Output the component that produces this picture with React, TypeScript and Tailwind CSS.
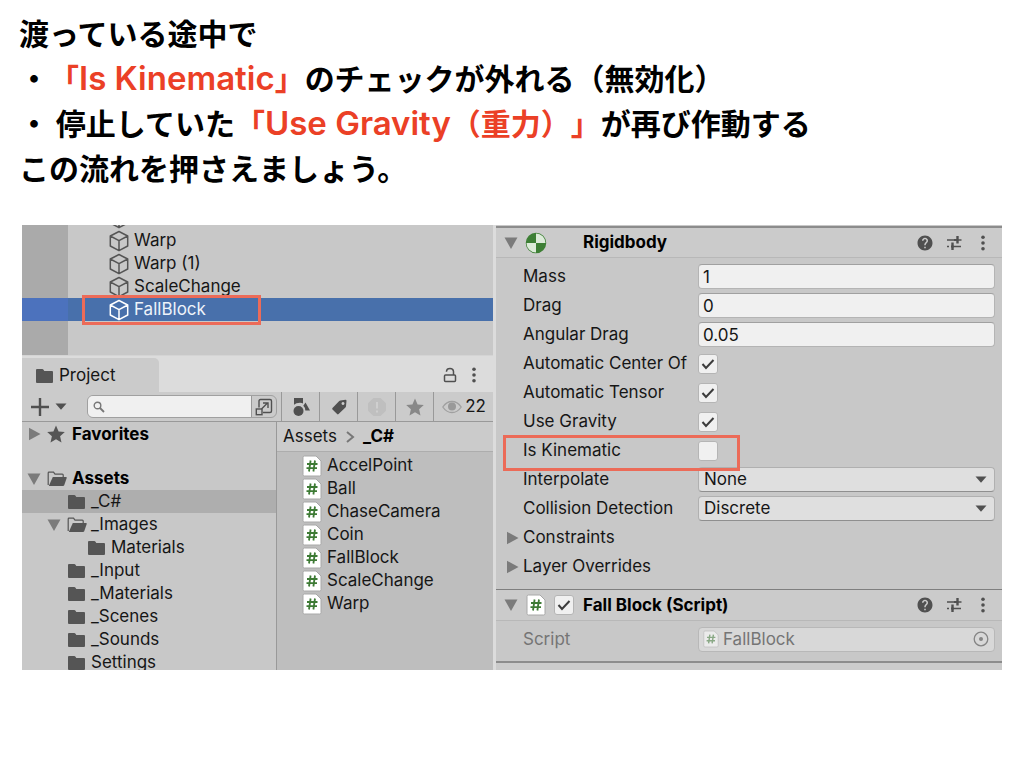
import { useState } from "react";
import type { ReactNode } from "react";
import { MdHelp } from "react-icons/md";

const CubeIcon = ({ className }: { className?: string }) => (
  <svg viewBox="0 0 20 22" className={`h-[22px] w-[20px] shrink-0 ${className}`} fill="none" stroke="currentColor" strokeWidth="1.5" strokeLinejoin="round">
    <path d="M10 1.5 18.7 6v10L10 20.7 1.3 16V6z M1.3 6 10 10.6 18.7 6 M10 10.6v10" />
  </svg>
);

const FolderIcon = () => (
  <svg viewBox="0 0 20 16" className="h-[16px] w-[20px] shrink-0" fill="#555">
    <path d="M1 2q0-1 1-1h5.3q.7 0 1 .6L9.3 3H17q1 0 1 1v10q0 1-1 1H2q-1 0-1-1z" />
  </svg>
);

const FolderOpenIcon = () => (
  <svg viewBox="0 0 20 16" className="h-[16px] w-[20px] shrink-0">
    <path d="M1.2 14V2q0-.8.8-.8h4.5l1.500 2h7.3q.9 0 .9.9V6" fill="none" stroke="#555" strokeWidth="1.2" />
    <path d="M5.8 6H19q1 0 .7.9l-2.500 7.3q-.3.8-1.2.8H1.8z" fill="#555" />
  </svg>
);

const ScriptIcon = ({ className }: { className?: string }) => (
  <svg viewBox="0 0 20 22" className={`shrink-0 ${className}`}>
    <path d="M2.500 1H14l5 5v13.500q0 1.500-1.500 1.500h-15Q1 21 1 19.500v-17Q1 1 2.500 1z" fill="#fff" stroke="#a8a8a8" />
    <path d="M8.600 5.500 7 16.500 M13 5.500l-1.600 11 M5 9h10.500 M4.500 13.200H15" fill="none" stroke="#3d7a34" strokeWidth="1.800" />
  </svg>
);

const StarIcon = ({ className }: { className?: string }) => (
  <svg viewBox="0 0 20 20" className={`h-[20px] w-[20px] shrink-0 ${className}`} fill="currentColor">
    <path d="m10 1.500 2.600 5.900 6.200.6-4.700 4.200 1.400 6.300L10 15.200l-5.500 3.300 1.400-6.300L1.200 8l6.200-.6z" />
  </svg>
);

const Foldout = ({ open }: { open?: boolean }) => (
  <svg viewBox="0 0 14 14" className="h-[14px] w-[14px] shrink-0" fill="#7b7b7b">
    {open ? <path d="M.5 1.500h13L7 13z" /> : <path d="M1 .8v12.400L12.500 7z" />}
  </svg>
);

const Caret = ({ className }: { className?: string }) => (
  <svg viewBox="0 0 12 7" className={`h-[7px] w-[12px] shrink-0 ${className}`} fill="#505050">
    <path d="M.5.500h11L6 6.800z" />
  </svg>
);

const SlidersIcon = () => (
  <svg viewBox="0 0 16 16" className="h-[16px] w-[16px]" fill="none" stroke="#505050">
    <path d="M1 5h7 M12 5h3.500 M1 11.500h2 M8 11.500h7" strokeWidth="1.600" />
    <path d="M11.500 1v7.500 M6.500 7.500V15" strokeWidth="2.400" />
    <path d="M8 5h3.500 M5 11.500h3" strokeWidth="1.800" />
  </svg>
);

const DotsIcon = () => (
  <svg viewBox="0 0 6 16" className="h-[16px] w-[6px]" fill="#505050">
    <circle cx="3" cy="2.200" r="1.800" />
    <circle cx="3" cy="8" r="1.800" />
    <circle cx="3" cy="13.800" r="1.800" />
  </svg>
);

const hierarchy = ["Warp", "Warp (1)", "ScaleChange"];

const scripts = ["AccelPoint", "Ball", "ChaseCamera", "Coin", "FallBlock", "ScaleChange", "Warp"];

const folders = [
  { name: "_C#", indent: "pl-[45px]", selected: true },
  { name: "_Images", indent: "pl-[25px]", open: true },
  { name: "Materials", indent: "pl-[65px]" },
  { name: "_Input", indent: "pl-[45px]" },
  { name: "_Materials", indent: "pl-[45px]" },
  { name: "_Scenes", indent: "pl-[45px]" },
  { name: "_Sounds", indent: "pl-[45px]" },
  { name: "Settings", indent: "pl-[45px]" },
];

const Hierarchy = () => (
  <div className="flex h-[130px] flex-col justify-end overflow-hidden bg-[linear-gradient(to_right,#aaaaaa_46px,#c8c8c8_46px)] pb-[34px]">
    <div className="flex h-[23px] shrink-0 items-center pl-[87px]">
      <CubeIcon className="text-[#555]" />
    </div>
    {hierarchy.map((name) => (
      <div key={name} className="flex h-[23px] shrink-0 items-center gap-[5px] pl-[87px]">
        <CubeIcon className="text-[#555]" />
        {name}
      </div>
    ))}
    <div className="relative flex h-[23px] shrink-0 items-center gap-[5px] bg-[linear-gradient(to_right,#4c72bd_46px,#4870ab_46px)] pl-[87px] text-[#eef3fa]">
      <CubeIcon className="text-white" />
      FallBlock
      <div className="absolute -top-[3px] left-[60px] h-[30px] w-[179px] border-3 border-[#ec6b58]" />
    </div>
  </div>
);

const ProjectTab = () => (
  <div className="flex h-[37px] items-end justify-between border-t border-[#d4d4d4] bg-[#dcdcdc]">
    <div className="flex h-[34px] w-[137px] items-center gap-[4px] rounded-tr-[5px] bg-[#cbcbcb] pt-px pl-[13px]">
      <FolderIcon />
      Project
    </div>
    <div className="flex h-[34px] items-center gap-[14px] pr-[16px]">
      <button aria-label="Lock">
        <svg viewBox="0 0 14 16" className="h-[16px] w-[14px]" fill="none" stroke="#505050" strokeWidth="1.500">
          <rect x="1.500" y="8" width="11" height="6.500" rx="1" />
          <path d="M3.500 4.800V4.300Q3.700 1.500 7 1.500t3.500 3V8" />
        </svg>
      </button>
      <button aria-label="Project menu">
        <DotsIcon />
      </button>
    </div>
  </div>
);

const Tool = ({ label, children }: { label: string; children: ReactNode }) => (
  <button aria-label={label} className="flex w-[38px] shrink-0 items-center justify-center border-l border-[#999]">
    {children}
  </button>
);

const Toolbar = () => (
  <div className="flex h-[30px] border-b border-[#999] bg-[#cbcbcb]">
    <button aria-label="Create" className="flex shrink-0 items-center gap-[6px] pr-[20px] pl-[9px]">
      <svg viewBox="0 0 18 18" className="h-[18px] w-[18px]" stroke="#505050" strokeWidth="2.400">
        <path d="M9 0v18 M0 9h18" />
      </svg>
      <Caret />
    </button>
    <div className="my-[3px] flex min-w-0 flex-1 overflow-hidden rounded-[6px] border border-[#a0a0a0]">
      <label className="flex min-w-0 flex-1 items-center gap-[4px] bg-[#f0f0f0] pl-[5px]">
        <svg viewBox="0 0 12 12" className="h-[12px] w-[12px] shrink-0" fill="none" stroke="#777" strokeWidth="1.400">
          <circle cx="4.500" cy="4.500" r="3.300" />
          <path d="m7 7 4 4" strokeWidth="1.800" />
        </svg>
        <input aria-label="Search assets" className="w-full min-w-0 bg-transparent outline-none" />
      </label>
      <button aria-label="Open in search" className="flex w-[25px] shrink-0 items-center justify-center border-l border-[#999]">
        <svg viewBox="0 0 18 18" className="h-[18px] w-[18px]" fill="none" stroke="#505050" strokeWidth="1.400">
          <path d="M4 9.500V3q0-1.500 1.500-1.500H15q1.500 0 1.500 1.500v10q0 1.500-1.500 1.500H8" />
          <rect x="1.300" y="11" width="5.700" height="5.700" />
          <path d="m6.500 11 6-6 M8 5h5v5" />
        </svg>
      </button>
    </div>
    <div className="w-[4px] shrink-0" />
    <Tool label="Filter by type">
      <svg viewBox="0 0 20 20" className="h-[20px] w-[20px]" fill="#505050">
        <path d="M3 1h9v5.500q-1-.8-3-.8-4 0-6 2z" />
        <path d="m14.500 5.500 4.500 8h-4.700q.2-2.800-2-4.700z" />
        <circle cx="7.500" cy="14" r="5" />
      </svg>
    </Tool>
    <Tool label="Filter by label">
      <svg viewBox="0 0 18 18" className="h-[18px] w-[18px]" fill="#505050">
        <path fillRule="evenodd" d="M10.500 2.500 15.500 1.800q1 0 1 1L16 8.300q-.1.700-.6 1.200l-6.800 6.600q-.8.700-1.500 0L2.500 11.400q-.7-.8 0-1.500L9 3.300q.6-.7 1.500-.8zM13 3.900a1.500 1.500 0 1 0 .01 0z" />
      </svg>
    </Tool>
    <Tool label="Filter by import log">
      <svg viewBox="0 0 20 20" className="h-[20px] w-[20px]">
        <path d="M6.300 1h7.400L19 6.300v7.400L13.700 19H6.300L1 13.700V6.300z" fill="#bfbfbf" />
        <path d="M10 5v6.500 M10 13.500v2" stroke="#cfcfcf" strokeWidth="2" />
      </svg>
    </Tool>
    <Tool label="Save search">
      <StarIcon className="text-[#888]" />
    </Tool>
    <button aria-label="Hidden packages, 22" className="flex shrink-0 items-center gap-[3px] border-l border-[#999] pr-[7px] pl-[8px]">
      <svg viewBox="0 0 20 14" className="h-[14px] w-[20px]" fill="none" stroke="#a0a0a0" strokeWidth="1.300">
        <path d="M.8 7Q4.500 1.500 10 1.500T19.200 7Q15.500 12.500 10 12.500T.8 7z" />
        <circle cx="10" cy="6.500" r="4" fill="#999" stroke="none" />
      </svg>
      22
    </button>
  </div>
);

const ProjectBrowser = () => (
  <div className="flex min-h-0 flex-1">
    <div className="w-[255px] shrink-0 overflow-hidden border-r border-[#999]">
      <div className="flex h-[24px] items-center pl-[6px] font-bold text-black">
        <Foldout />
        <StarIcon className="mr-[6px] ml-[4px] text-[#555]" />
        Favorites
      </div>
      <div className="mt-[21px] flex h-[23px] items-center pl-[5px] font-bold text-black">
        <Foldout open />
        <span className="mr-[5px] ml-[6px]">
          <FolderOpenIcon />
        </span>
        Assets
      </div>
      {folders.map((f) => (
        <div key={f.name} className={`flex h-[23px] items-center ${f.indent} ${f.selected ? "bg-[#aeaeae]" : ""}`}>
          {f.open && (
            <span className="mr-[6px]">
              <Foldout open />
            </span>
          )}
          {f.open ? <FolderOpenIcon /> : <FolderIcon />}
          <span className="ml-[4px]">{f.name}</span>
        </div>
      ))}
    </div>
    <div className="min-w-0 flex-1 bg-[#bebebe]">
      <div className="flex h-[30px] items-center gap-[8px] border-b border-[#adadad] bg-[#cbcbcb] pl-[6px]">
        <span>Assets</span>
        <svg viewBox="0 0 10 12" className="h-[12px] w-[10px]" fill="none" stroke="#777" strokeWidth="2">
          <path d="m2 1 6 5-6 5" />
        </svg>
        <span className="font-bold text-black">_C#</span>
      </div>
      <div className="pt-[2px]">
        {scripts.map((name) => (
          <div key={name} className="flex h-[23px] items-center gap-[5px] pl-[25px]">
            <ScriptIcon className="h-[22px] w-[20px]" />
            {name}
          </div>
        ))}
      </div>
    </div>
  </div>
);

const Check = ({ label, value }: { label: string; value: boolean }) => {
  const [on, setOn] = useState(value);
  return (
    <span className="relative h-[20px] w-[20px] shrink-0">
      <input
        id={label}
        aria-label={label}
        type="checkbox"
        checked={on}
        onChange={() => setOn(!on)}
        className="block h-[20px] w-[20px] appearance-none rounded-[3px] border border-[#b5b5b5] bg-[#f0f0f0]"
      />
      {on && (
        <svg viewBox="0 0 20 20" className="pointer-events-none absolute inset-0" fill="none" stroke="#3c3c3c" strokeWidth="2">
          <path d="m4.500 10 3.500 4 7.500-8" />
        </svg>
      )}
    </span>
  );
};

const Row = ({ label, children }: { label: string; children: ReactNode }) => (
  <div className="flex h-[29px] items-center pr-[7px]">
    <label htmlFor={label} className="w-[202px] shrink-0 pl-[27px] whitespace-nowrap">
      {label}
    </label>
    {children}
  </div>
);

const NumberRow = ({ label, value }: { label: string; value: string }) => (
  <Row label={label}>
    <input
      id={label}
      defaultValue={value}
      className="h-[25px] w-full min-w-0 flex-1 rounded-[4px] border border-[#b4b4b4] border-t-[#a0a0a0] bg-[#f0f0f0] pl-[4px] outline-none"
    />
  </Row>
);

const SelectRow = ({ label, value }: { label: string; value: string }) => (
  <Row label={label}>
    <div className="relative flex min-w-0 flex-1">
      <select id={label} className="h-[25px] w-full appearance-none rounded-[4px] border border-[#b0b0b0] border-b-[#8f8f8f] bg-[#dfdfdf] pl-[5px]">
        <option>{value}</option>
      </select>
      <Caret className="pointer-events-none absolute top-[9px] right-[8px]" />
    </div>
  </Row>
);

const HeaderActions = () => (
  <div className="ml-auto flex items-center pr-[16px]">
    <button aria-label="Help" className="mr-[12px]">
      <MdHelp size={18} color="#505050" />
    </button>
    <button aria-label="Presets" className="mr-[18px]">
      <SlidersIcon />
    </button>
    <button aria-label="More">
      <DotsIcon />
    </button>
  </div>
);

const Inspector = () => (
  <div className="flex flex-[506] flex-col bg-[#c8c8c8] pt-px">
    <div className="flex h-[32px] items-center border-t-2 border-b border-t-[#8c8c8c] border-b-[#b8b8b8] bg-[#cbcbcb] pl-[8px] font-bold text-black">
      <Foldout open />
      <svg viewBox="0 0 22 22" className="mr-[36px] ml-[7px] h-[22px] w-[22px]">
        <circle cx="11" cy="11" r="9.500" fill="#dcebd9" stroke="#3d7f35" strokeWidth="1.500" />
        <path d="M11 11V1.500a9.500 9.500 0 0 1 9.500 9.500z M11 11v9.500A9.500 9.500 0 0 1 1.500 11z" fill="#dcebd9" />
        <path d="M11 11H1.500A9.500 9.500 0 0 1 11 1.500z M11 11h9.500a9.500 9.500 0 0 1-9.500 9.500z" fill="#3d7f35" />
      </svg>
      Rigidbody
      <HeaderActions />
    </div>
    <div className="pt-[4px] pb-[8px]">
      <NumberRow label="Mass" value="1" />
      <NumberRow label="Drag" value="0" />
      <NumberRow label="Angular Drag" value="0.05" />
      <Row label="Automatic Center Of">
        <Check label="Automatic Center Of" value={true} />
      </Row>
      <Row label="Automatic Tensor">
        <Check label="Automatic Tensor" value={true} />
      </Row>
      <Row label="Use Gravity">
        <Check label="Use Gravity" value={true} />
      </Row>
      <div className="relative">
        <Row label="Is Kinematic">
          <Check label="Is Kinematic" value={false} />
        </Row>
        <div className="pointer-events-none absolute -top-px left-[7px] z-10 h-[36px] w-[237px] border-3 border-[#ec6b58]" />
      </div>
      <SelectRow label="Interpolate" value="None" />
      <SelectRow label="Collision Detection" value="Discrete" />
      {["Constraints", "Layer Overrides"].map((name) => (
        <button key={name} className="flex h-[29px] w-full items-center pl-[10px]">
          <Foldout />
          <span className="ml-[3px]">{name}</span>
        </button>
      ))}
    </div>
    <div className="flex h-[32px] items-center border-t border-b border-t-[#7f7f7f] border-b-[#b8b8b8] bg-[#cbcbcb] pl-[8px] font-bold text-black">
      <Foldout open />
      <ScriptIcon className="mr-[8px] ml-[8px] h-[22px] w-[20px]" />
      <Check label="Fall Block enabled" value={true} />
      <span className="ml-[9px]">Fall Block (Script)</span>
      <HeaderActions />
    </div>
    <div className="flex h-[40px] items-center pr-[7px] pb-[4px] text-[#757575]">
      <span className="w-[202px] shrink-0 pl-[27px]">Script</span>
      <div className="flex h-[25px] min-w-0 flex-1 items-center rounded-[4px] border border-[#b8b8b8] bg-[#d8d8d8] pr-[5px] pl-[4px]">
        <ScriptIcon className="h-[18px] w-[16px] opacity-50" />
        <span className="ml-[4px]">FallBlock</span>
        <button aria-label="Select script" className="ml-auto">
          <svg viewBox="0 0 16 16" className="h-[16px] w-[16px]" fill="none" stroke="#858585" strokeWidth="1.300">
            <circle cx="8" cy="8" r="6.800" />
            <circle cx="8" cy="8" r="2" fill="#858585" stroke="none" />
          </svg>
        </button>
      </div>
    </div>
    <div className="flex-1 border-t-2 border-[#8c8c8c] bg-[#cbcbcb]" />
  </div>
);

const Mark = ({ children }: { children: ReactNode }) => <span className="text-[#eb4026]">{children}</span>;

const Latin = ({ children }: { children: ReactNode }) => (
  <span className="font-[Inter,sans-serif] text-[33px] leading-none font-semibold">{children}</span>
);

export default function App() {
  return (
    <main className="min-h-screen bg-white pt-[10px]">
      <div className="pl-[19px] font-['Noto_Sans_CJK_JP',sans-serif] text-[30px] leading-[45px] font-bold text-black [text-spacing-trim:space-all]">
        <p className="h-[45px]">渡っている途中で</p>
        <p className="h-[45px]">
          ・
          <Mark>
            「<Latin>Is Kinematic</Latin>」
          </Mark>
          のチェックが外れる（無効化）
        </p>
        <p className="h-[45px]">
          ・ 停止していた
          <Mark>
            「<Latin>Use Gravity</Latin>（重力）」
          </Mark>
          が再び作動する
        </p>
        <p className="h-[45px]">この流れを押さえましょう。</p>
      </div>
      <div className="mx-[22px] mt-[35px] flex h-[445px] overflow-hidden font-[Inter,sans-serif] text-[17px] leading-[23px] text-[#161616]">
        <div className="flex min-w-0 flex-[471] flex-col bg-[#c8c8c8]">
          <Hierarchy />
          <ProjectTab />
          <Toolbar />
          <ProjectBrowser />
        </div>
        <div className="w-[3px] bg-[#dcdcdc]" />
        <Inspector />
      </div>
    </main>
  );
}
